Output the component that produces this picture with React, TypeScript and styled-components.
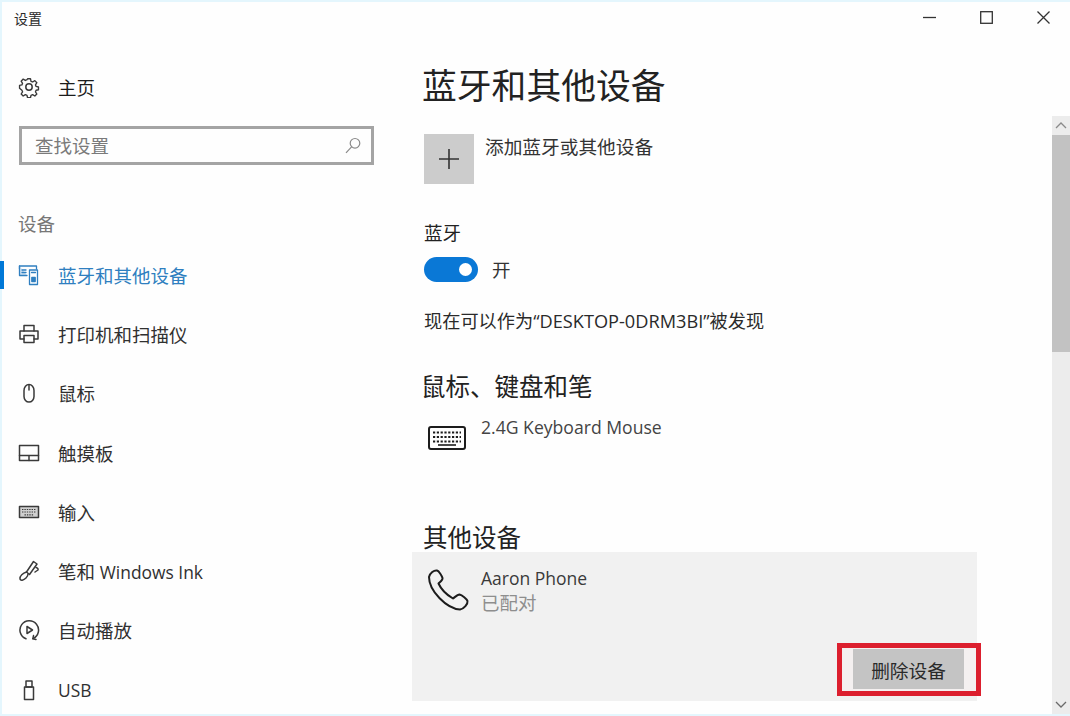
import React from "react";
import styled, { createGlobalStyle } from "styled-components";

const Global = createGlobalStyle`
  html, body { margin: 0; padding: 0; background: #fff; }
  #root { width: 1070px; height: 716px; overflow: hidden; }
`;

const FONT = `"Open Sans", "Noto Sans CJK SC", sans-serif`;

const Window = styled.div`
  width: 1070px;
  height: 716px;
  box-sizing: border-box;
  border: 2px solid #e4f6fd;
  border-right: 0;
  background: #fefefe;
  font-family: ${FONT};
  color: #2a2a2a;
  display: flex;
  flex-direction: column;
`;

const TitleBar = styled.div`
  height: 35px;
  flex: none;
  display: flex;
  align-items: center;
  justify-content: space-between;
  padding-left: 12px;
  font-size: 14px;
  margin-top: -2px;
`;

const Controls = styled.div`
  display: flex;
  align-items: center;
  gap: 44px;
  padding-right: 20px;
  margin-top: -1px;
  svg { display: block; }
`;

const Body = styled.div`
  flex: 1;
  min-height: 0;
  display: flex;
`;

const Sidebar = styled.nav`
  width: 410px;
  flex: none;
  display: flex;
  flex-direction: column;
`;

const NavItem = styled.div<{ $active?: boolean }>`
  position: relative;
  height: 59.3px;
  flex: none;
  box-sizing: border-box;
  display: flex;
  align-items: center;
  gap: 18px;
  padding-left: 16px;
  font-size: 18.5px;
  color: ${(p) => (p.$active ? "#2f7fc0" : "#303030")};
  svg { flex: none; display: block; }
  &::before {
    content: "";
    display: ${(p) => (p.$active ? "block" : "none")};
    position: absolute;
    left: -2px;
    top: 16px;
    width: 4px;
    height: 28px;
    background: #0078d7;
  }
`;

const HomeRow = styled(NavItem)`
  margin-top: 22px;
  height: 60px;
  color: #1c1c1c;
`;

const Latin = styled.span`
  font-size: 17.4px;
`;

const SearchBox = styled.div`
  margin: 9px 0 0 17px;
  width: 355px;
  height: 39px;
  flex: none;
  box-sizing: border-box;
  border: 3px solid #a4a4a4;
  display: flex;
  align-items: center;
  justify-content: space-between;
  padding: 0 10px 2px 13px;
  font-size: 18.5px;
  color: #7a7a7a;
  svg { margin-top: 2px; }
`;

const GroupLabel = styled.div`
  margin: 44px 0 6px 16px;
  height: 30px;
  flex: none;
  line-height: 30px;
  font-size: 18.5px;
  color: #777;
`;

const Main = styled.main`
  flex: 1;
  min-width: 0;
  display: flex;
  flex-direction: column;
`;

const PageTitle = styled.h1`
  margin: 26px 0 0 10px;
  height: 50px;
  flex: none;
  line-height: 50px;
  font-size: 34.8px;
  font-weight: 400;
  color: #222;
`;

const AddRow = styled.div`
  margin: 23px 0 0 12px;
  flex: none;
  display: flex;
  align-items: flex-start;
  gap: 11px;
  font-size: 18.7px;
  color: #333;
`;

const AddTile = styled.div`
  width: 50px;
  height: 50px;
  background: #cccccc;
  display: flex;
  align-items: center;
  justify-content: center;
`;

const AddLabel = styled.span`
  line-height: 26px;
`;

const FieldLabel = styled.div`
  margin: 35px 0 0 12px;
  height: 28px;
  flex: none;
  line-height: 28px;
  font-size: 18.5px;
  color: #222;
`;

const ToggleRow = styled.div`
  margin: 9px 0 0 12px;
  flex: none;
  display: flex;
  align-items: center;
  gap: 14px;
  font-size: 18.5px;
  color: #333;
`;

const Toggle = styled.div`
  width: 54px;
  height: 25px;
  border-radius: 13px;
  background: #0a78d6;
  box-sizing: border-box;
  display: flex;
  align-items: center;
  justify-content: flex-end;
  padding-right: 6px;
`;

const Knob = styled.span`
  width: 13px;
  height: 13px;
  border-radius: 50%;
  background: #fff;
`;

const Discoverable = styled.div`
  margin: 25px 0 0 12px;
  height: 28px;
  flex: none;
  line-height: 28px;
  font-size: 18.2px;
  color: #2a2a2a;
  white-space: nowrap;
`;

const SectionTitle = styled.h2<{ $gap: number; $inset: number }>`
  margin: ${(p) => p.$gap}px 0 0 ${(p) => p.$inset}px;
  height: 28px;
  flex: none;
  line-height: 28px;
  font-size: 24.5px;
  font-weight: 400;
  color: #222;
`;

const DeviceRow = styled.div`
  margin: 13px 0 0 16px;
  flex: none;
  display: flex;
  align-items: flex-start;
  gap: 15px;
  height: 62px;
  font-size: 17.6px;
  color: #444;
  line-height: 26px;
  svg { margin-top: 12px; }
`;

const DeviceCard = styled.section`
  width: 565px;
  height: 149px;
  flex: none;
  background: #f1f1f1;
  box-sizing: border-box;
  padding: 14px 0 0 15px;
  display: flex;
  flex-direction: column;
`;

const CardTop = styled.div`
  display: flex;
  gap: 12px;
  align-items: flex-start;
  height: 77px;
  svg { margin-top: 3px; flex: none; }
`;

const CardText = styled.div`
  display: flex;
  flex-direction: column;
  font-size: 17.5px;
  line-height: 25px;
  color: #3a3a3a;
`;

const Status = styled.span`
  font-size: 18.5px;
  line-height: 24px;
  color: #8e8e8e;
`;

const CardFooter = styled.div`
  display: flex;
  justify-content: flex-end;
  margin-right: -4px;
`;

const Highlight = styled.div`
  width: 144px;
  height: 53px;
  box-sizing: border-box;
  border: 5px solid #dc1f2e;
  background: #f4f0f0;
  padding: 1px 12px 2px 11px;
  display: flex;
`;

const RemoveButton = styled.div`
  flex: 1;
  background: #c4c4c4;
  display: flex;
  align-items: center;
  justify-content: center;
  font-size: 18.7px;
  color: #2a2a2a;
`;

const Scrollbar = styled.aside`
  width: 18px;
  flex: none;
  margin-top: 81px;
  background: #ececec;
  display: flex;
  flex-direction: column;
  align-items: stretch;
  svg { display: block; margin: 0 auto; }
`;

const ArrowCell = styled.div`
  height: 19px;
  display: flex;
  align-items: center;
`;

const Thumb = styled.div`
  height: 217px;
  background: #c2c2c2;
`;

const Spacer = styled.div`
  flex: 1;
`;

const Icon = ({ children, size = 22, vb = 22 }: { children: React.ReactNode; size?: number; vb?: number }) => (
  <svg width={size} height={size} viewBox={`0 0 ${vb} ${vb}`} fill="none" stroke="#3a3a3a" strokeWidth={1.5} strokeLinecap="round" strokeLinejoin="round">
    {children}
  </svg>
);

const Gear = () => (
  <Icon>
    <circle cx="11" cy="11" r="3.2" />
    <path d="M9.4 2h3.200l.6 2.800 1.800.8 2.400-1.500 2.200 2.300-1.500 2.400.7 1.700 2.600.6v3l-2.600.6-.7 1.700 1.500 2.400-2.200 2.200-2.400-1.500-1.800.8-.6 2.600H9.400l-.6-2.600-1.800-.8-2.400 1.500-2.200-2.200 1.500-2.400-.7-1.700L.6 12.400v-3l2.600-.6.7-1.700-1.500-2.400 2.200-2.300 2.400 1.500 1.800-.8z" transform="translate(1 .9) scale(.91)" />
  </Icon>
);

const BluetoothDevices = () => (
  <Icon>
    <g stroke="#2f7fc0" strokeWidth={1.3}>
      <path d="M1.500 5V2h17v3" />
      <path d="M1.500 2v9.500H9" fill="#cfe2f2" />
      <rect x="11.500" y="6" width="8" height="14.500" fill="#fff" />
      <rect x="13.800" y="13.500" width="3.400" height="4" fill="#2f7fc0" />
      <path d="M4 6h4M4 8.500h4M13.500 8.500h4" />
    </g>
  </Icon>
);

const Printer = () => (
  <Icon>
    <path d="M6 8V2.500h10V8" />
    <path d="M6 16H2V8h18v8h-4" />
    <rect x="6" y="12.500" width="10" height="7" />
  </Icon>
);

const MouseIcon = () => (
  <Icon>
    <path d="M6 8.500a5 6 0 0 1 10 0v6a5 5.500 0 0 1-10 0z" />
    <path d="M11 2.800V8" />
  </Icon>
);

const Touchpad = () => (
  <Icon>
    <rect x="1.500" y="3.500" width="19" height="15" />
    <path d="M1.500 13.500h19M11 13.500v5" />
  </Icon>
);

const KeyboardSmall = () => (
  <Icon>
    <rect x="1.500" y="5.500" width="19" height="11" fill="#d0d0d0" />
    <path d="M4 8.500h14M4 11h14M6.500 13.800h9" strokeDasharray="1.400 1" strokeWidth={1.2} strokeLinecap="butt" />
  </Icon>
);

const Pen = () => (
  <Icon>
    <path d="M15.500 1.500 19 4 11.500 14.500 8.500 12z" />
    <path d="M8.500 12C5 13 1.500 16 2 19c.5 2 3.500 1.500 6-1 2-2 2-3 2-4" />
    <path d="M18 7.500c1.500.5 2.500 1.500 2 2.500l-3 2" />
  </Icon>
);

const AutoPlay = () => (
  <Icon>
    <path d="M8 19.800A9.300 9.300 0 1 1 15 19.600" />
    <path d="M15.500 16.600 14.800 19.800l3.200.6" />
    <path d="M9 7.500v7l5.500-3.500z" />
  </Icon>
);

const Usb = () => (
  <Icon>
    <path d="M8 2h6v6H8z" />
    <path d="M6.500 8h9v12.500h-9z" />
  </Icon>
);

const SearchGlyph = () => (
  <svg width="16" height="17" viewBox="0 0 16 17" fill="none" stroke="#8a8a8a" strokeWidth={1.2}>
    <circle cx="10" cy="6.300" r="4.800" />
    <path d="M6.600 9.800 1 15.800" />
  </svg>
);

const Plus = () => (
  <svg width="22" height="22" viewBox="0 0 22 22" stroke="#333" strokeWidth={1.6}>
    <path d="M11 1v20M1 11h20" />
  </svg>
);

const Keyboard = () => (
  <svg width="38" height="24" viewBox="0 0 38 24" fill="none" stroke="#1c1c1c" strokeWidth={2}>
    <rect x="1" y="1" width="36" height="22" rx="2" />
    <path d="M5 6.500h28M5 11h28M5 15.500h28" strokeDasharray="2.200 1.600" strokeWidth={2} />
    <path d="M10 19h18" strokeWidth={1.6} />
  </svg>
);

const Phone = () => (
  <svg width="42" height="42" viewBox="0 0 42 42" fill="none" stroke="#1c1c1c" strokeWidth={2} strokeLinejoin="round">
    <path d="M2 8C3 4 7 1 10 1.500 12 2 15 7 15.500 9 16 11 13 13 11.500 14.500 14 20 20 26 26 29.500 28 28 30.500 25.500 32.500 25.500 35 26 40 30 40.500 32 41 35 37 40 33 40.500 20 40 2 22 2 8Z" />
  </svg>
);

const navItems: { label: React.ReactNode; key: string; icon: React.ReactNode; active?: boolean }[] = [
  { key: "bt", label: "蓝牙和其他设备", icon: <BluetoothDevices />, active: true },
  { key: "printer", label: "打印机和扫描仪", icon: <Printer /> },
  { key: "mouse", label: "鼠标", icon: <MouseIcon /> },
  { key: "touch", label: "触摸板", icon: <Touchpad /> },
  { key: "input", label: "输入", icon: <KeyboardSmall /> },
  { key: "pen", label: <>笔和 <Latin>Windows Ink</Latin></>, icon: <Pen /> },
  { key: "auto", label: "自动播放", icon: <AutoPlay /> },
  { key: "usb", label: <Latin>USB</Latin>, icon: <Usb /> },
];

export default function App() {
  return (
    <>
      <Global />
      <Window>
        <TitleBar>
          <span>设置</span>
          <Controls>
            <svg width="13" height="13" viewBox="0 0 13 13" stroke="#333" strokeWidth={1.3}><path d="M0 6.500h13" /></svg>
            <svg width="13" height="13" viewBox="0 0 13 13" fill="none" stroke="#333" strokeWidth={1.3}><rect x=".7" y=".7" width="11.600" height="11.600" /></svg>
            <svg width="13" height="13" viewBox="0 0 13 13" stroke="#333" strokeWidth={1.3}><path d="M.5.5l12 12M12.500.5l-12 12" /></svg>
          </Controls>
        </TitleBar>
        <Body>
          <Sidebar>
            <HomeRow>
              <Gear />
              <span>主页</span>
            </HomeRow>
            <SearchBox>
              <span>查找设置</span>
              <SearchGlyph />
            </SearchBox>
            <GroupLabel>设备</GroupLabel>
            {navItems.map((n) => (
              <NavItem key={n.key} $active={n.active}>
                {n.icon}
                <span>{n.label}</span>
              </NavItem>
            ))}
          </Sidebar>
          <Main>
            <PageTitle>蓝牙和其他设备</PageTitle>
            <AddRow>
              <AddTile><Plus /></AddTile>
              <AddLabel>添加蓝牙或其他设备</AddLabel>
            </AddRow>
            <FieldLabel>蓝牙</FieldLabel>
            <ToggleRow>
              <Toggle><Knob /></Toggle>
              <span>开</span>
            </ToggleRow>
            <Discoverable>现在可以作为“DESKTOP-0DRM3BI”被发现</Discoverable>
            <SectionTitle $gap={38} $inset={9}>鼠标、键盘和笔</SectionTitle>
            <DeviceRow>
              <Keyboard />
              <span>2.4G Keyboard Mouse</span>
            </DeviceRow>
            <SectionTitle $gap={48} $inset={11}>其他设备</SectionTitle>
            <DeviceCard>
              <CardTop>
                <Phone />
                <CardText>
                  <span>Aaron Phone</span>
                  <Status>已配对</Status>
                </CardText>
              </CardTop>
              <CardFooter>
                <Highlight>
                  <RemoveButton>删除设备</RemoveButton>
                </Highlight>
              </CardFooter>
            </DeviceCard>
          </Main>
          <Scrollbar>
            <ArrowCell>
              <svg width="12" height="7" viewBox="0 0 12 7" fill="none" stroke="#8a8a8a" strokeWidth={1.3}><path d="M1 6l5-5 5 5" /></svg>
            </ArrowCell>
            <Thumb />
            <Spacer />
            <ArrowCell>
              <svg width="12" height="7" viewBox="0 0 12 7" fill="none" stroke="#6a6a6a" strokeWidth={1.3}><path d="M1 1l5 5 5-5" /></svg>
            </ArrowCell>
          </Scrollbar>
        </Body>
      </Window>
    </>
  );
}
